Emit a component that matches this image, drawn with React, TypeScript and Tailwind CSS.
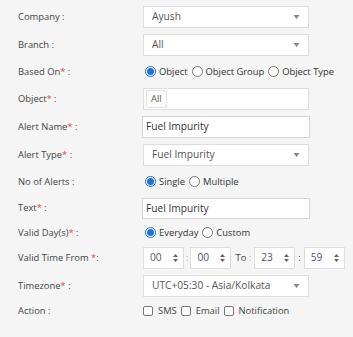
import React from 'react';

const font = { fontFamily: '"Open Sans", "Liberation Sans", sans-serif' };

function Req() {
  return <span className="text-[#e8453c]">*</span>;
}

function Label({ text, req }: { text: string; req?: boolean }) {
  return (
    <div className="w-[143px] shrink-0 pl-[18px] text-[9.4px] text-[#444]">
      {text}
      {req && <Req />} :
    </div>
  );
}

function Caret() {
  return (
    <svg width="7" height="5" viewBox="0 0 7 5" className="absolute right-[8px] top-1/2 -translate-y-1/2">
      <path d="M0.5 0.5 L6.5 0.5 L3.5 4.5 Z" fill="#888" />
    </svg>
  );
}

function Select({ value }: { value: string }) {
  return (
    <div className="relative flex h-full w-[166px] items-center border border-[#dedede] bg-white pl-[8px] text-[10.2px] text-[#555]">
      {value}
      <Caret />
    </div>
  );
}

function TextInput({ value }: { value: string }) {
  return (
    <div className="-ml-px flex h-full w-[168px] items-center border border-[#d6d6d6] bg-white pl-[3px] text-[10.2px] text-[#333]">
      {value}
    </div>
  );
}

function Radio({ on }: { on?: boolean }) {
  return (
    <span
      className={
        'mr-[3px] inline-flex h-[11px] w-[11px] shrink-0 items-center justify-center rounded-full border bg-white ' +
        (on ? 'border-[#1a73e8]' : 'border-[#777]')
      }
    >
      {on && <span className="h-[7px] w-[7px] rounded-full bg-[#1a73e8]" />}
    </span>
  );
}

function Check() {
  return <span className="mr-[5px] inline-block h-[10px] w-[10px] shrink-0 rounded-[2px] border border-[#777] bg-white" />;
}

function RadioGroup({ items }: { items: string[] }) {
  return (
    <div className="flex items-center pl-[2px] text-[9.4px] text-[#333]">
      {items.map((it, i) => (
        <span key={it} className="mr-[4px] flex items-center">
          <Radio on={i === 0} />
          {it}
        </span>
      ))}
    </div>
  );
}

function Spin({ value }: { value: string }) {
  return (
    <div className="relative flex h-full w-[41px] items-center border border-[#dedede] bg-white pl-[6px] text-[10.2px] text-[#4a5878]">
      {value}
      <svg width="5" height="8" viewBox="0 0 5 8" className="absolute right-[5px] top-1/2 -translate-y-1/2">
        <path d="M0 3 L2.5 0 L5 3 Z M0 5 L2.5 8 L5 5 Z" fill="#666" />
      </svg>
    </div>
  );
}

export default function App() {
  return (
    <div className="h-[337px] w-[353px] bg-[#f5f5f5] pt-[6px]" style={font}>
      <div className="mb-[6px] flex h-[22px] items-center">
        <Label text="Company" />
        <Select value="Ayush" />
      </div>
      <div className="mb-[6px] flex h-[22px] items-center">
        <Label text="Branch" />
        <Select value="All" />
      </div>
      <div className="mb-[6px] flex h-[20px] items-center">
        <Label text="Based On" req />
        <RadioGroup items={['Object', 'Object Group', 'Object Type']} />
      </div>
      <div className="mb-[6px] flex h-[22px] items-center">
        <Label text="Object" req />
        <div className="flex h-full w-[166px] items-center border border-[#dedede] bg-white pl-[2px]">
          <span className="flex h-[18px] items-center rounded-[2px] border border-[#e2e2e2] px-[4px] text-[9.4px] text-[#555]">
            All
          </span>
        </div>
      </div>
      <div className="mb-[6px] flex h-[22px] items-center">
        <Label text="Alert Name" req />
        <TextInput value="Fuel Impurity" />
      </div>
      <div className="mb-[6px] flex h-[22px] items-center">
        <Label text="Alert Type" req />
        <Select value="Fuel Impurity" />
      </div>
      <div className="mb-[6px] flex h-[20px] items-center">
        <Label text="No of Alerts" />
        <RadioGroup items={['Single', 'Multiple']} />
      </div>
      <div className="mb-[5px] flex h-[21px] items-center">
        <Label text="Text" req />
        <TextInput value="Fuel Impurity" />
      </div>
      <div className="mb-[5px] flex h-[18px] items-center">
        <Label text="Valid Day(s)" req />
        <RadioGroup items={['Everyday', 'Custom']} />
      </div>
      <div className="mb-[6px] flex h-[22px] items-center">
        <div className="w-[143px] shrink-0 pl-[18px] text-[9.4px] text-[#444]">
          Valid Time From <Req />:
        </div>
        <Spin value="00" />
        <span className="mx-[2px] text-[9.4px] text-[#c9a05a]">:</span>
        <Spin value="00" />
        <span className="ml-[4px] mr-[3px] text-[9.4px] text-[#444]">
          To <span className="text-[#c9a05a]">:</span>
        </span>
        <Spin value="23" />
        <span className="mx-[3px] text-[9.4px] text-[#444]">:</span>
        <Spin value="59" />
      </div>
      <div className="mb-[4px] flex h-[22px] items-center">
        <Label text="Timezone" req />
        <Select value="UTC+05:30 - Asia/Kolkata" />
      </div>
      <div className="flex h-[20px] items-center">
        <Label text="Action" />
        <div className="flex items-center text-[9.4px] text-[#444]">
          <Check />
          <span className="mr-[4px]">SMS</span>
          <Check />
          <span className="mr-[4px]">Email</span>
          <Check />
          <span>Notification</span>
        </div>
      </div>
    </div>
  );
}
